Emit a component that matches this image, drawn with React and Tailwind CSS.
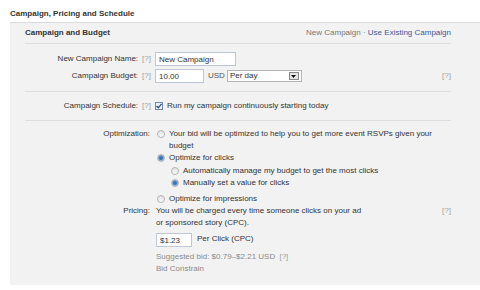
import React from 'react';

const Help = ({ className = '' }) => (
    <span className={`text-[#a0a0a0] ${className}`}>[?]</span>
);

const Radio = ({ checked }) => (
    <span className="inline-flex items-center justify-center w-[8px] h-[8px] rounded-full border border-[#b4b4b4] bg-gradient-to-b from-[#e2e2e2] to-[#fafafa] shrink-0">
        {checked && <span className="w-[4px] h-[4px] rounded-full bg-[#2f74c0] ring-1 ring-[#15508f]/40" />}
    </span>
);

const Checkbox = () => (
    <span className="inline-flex items-center justify-center w-[8px] h-[8px] border border-[#7387a8] bg-[#eef2f8] shrink-0">
        <svg width="6" height="6" viewBox="0 0 6 6">
            <path d="M0.6 3 L2.3 4.8 L5.5 0.8" fill="none" stroke="#1d4c9c" strokeWidth="1.3" />
        </svg>
    </span>
);

const Label = ({ children, help }) => (
    <div className="w-[126px] shrink-0 flex justify-end gap-[4px]">
        <span>{children}</span>
        {help && <Help />}
    </div>
);

const App = () => {
    return (
        <div className="w-[480px] h-[290px] bg-white overflow-hidden text-[8px] text-[#333] leading-[12px]" style={{ fontFamily: '"Liberation Sans", Arial, sans-serif' }}>
            <div className="pl-[10px] pt-[8px] h-[22px] font-bold">Campaign, Pricing and Schedule</div>

            <div className="ml-[10px] h-[263px] bg-[#f2f2f2] border-t border-[#dadada] pl-[15px] pr-[29px]">
                <div className="flex justify-between items-center h-[21px] border-b border-[#dedede]">
                    <span className="font-bold">Campaign and Budget</span>
                    <span className="text-[#777]">
                        New Campaign · <span className="text-[#3b5998]">Use Existing Campaign</span>
                    </span>
                </div>

                <div className="pt-[8px] pb-[8px] border-b border-[#dedede] flex flex-col gap-[3px]">
                    <div className="flex items-center">
                        <Label help>New Campaign Name:</Label>
                        <div className="pl-[4px]">
                            <input readOnly value="New Campaign" className="block w-[81px] h-[14px] bg-white border border-[#bdc7d8] px-[3px] text-[8px] outline-none" />
                        </div>
                    </div>
                    <div className="flex items-center">
                        <Label help>Campaign Budget:</Label>
                        <div className="flex-1 pl-[4px] flex items-center">
                            <input readOnly value="10.00" className="block w-[49px] h-[14px] bg-white border border-[#bdc7d8] px-[3px] text-[8px] outline-none" />
                            <span className="ml-[4px] text-[#555]">USD</span>
                            <div className="ml-[2px] w-[75px] h-[12px] bg-white border border-[#b5b5b5] flex items-center justify-between pl-[2px] pr-[2px]">
                                <span className="leading-[10px]">Per day</span>
                                <span className="w-[10px] h-[8px] border border-[#8a8a8a] bg-[#e6e6e6] flex items-center justify-center">
                                    <svg width="5" height="3" viewBox="0 0 5 3"><path d="M0 0 H5 L2.5 3 Z" fill="#111" /></svg>
                                </span>
                            </div>
                        </div>
                        <Help />
                    </div>
                </div>

                <div className="py-[8px] border-b border-[#dedede]">
                    <div className="flex items-center">
                        <Label help>Campaign Schedule:</Label>
                        <div className="pl-[4px] flex items-center gap-[4px]">
                            <Checkbox />
                            <span>Run my campaign continuously starting today</span>
                        </div>
                    </div>
                </div>

                <div className="pt-[7px]">
                    <div className="flex">
                        <div className="w-[125px] shrink-0 text-right">Optimization:</div>
                        <div className="flex-1 pl-[7px]">
                            <div className="flex gap-[4px]">
                                <span className="pt-[2px]"><Radio /></span>
                                <span className="w-[272px]">Your bid will be optimized to help you to get more event RSVPs given your budget</span>
                            </div>
                            <div className="flex items-center gap-[4px]"><Radio checked /><span>Optimize for clicks</span></div>
                            <div className="flex items-center gap-[4px] pl-[14px] mt-[1px]"><Radio /><span>Automatically manage my budget to get the most clicks</span></div>
                            <div className="flex items-center gap-[4px] pl-[14px]"><Radio checked /><span>Manually set a value for clicks</span></div>
                            <div className="flex items-center gap-[4px] mt-[4px]"><Radio /><span>Optimize for impressions</span></div>
                        </div>
                    </div>
                    <div className="flex">
                        <div className="w-[125px] shrink-0 text-right">Pricing:</div>
                        <div className="flex-1 pl-[6px]">
                            <div className="flex justify-between">
                                <span className="w-[210px]">You will be charged every time someone clicks on your ad or sponsored story (CPC).</span>
                                <Help />
                            </div>
                            <div className="flex items-center gap-[5px] mt-[4px]">
                                <input readOnly value="$1.23" className="block w-[36px] h-[14px] bg-white border border-[#bdc7d8] px-[3px] text-[8px] outline-none" />
                                <span className="-mt-[3px]">Per Click (CPC)</span>
                            </div>
                            <div className="text-[#8a8a8a] mt-[4px]">Suggested bid: $0.79–$2.21 USD <Help className="ml-[2px]" /></div>
                            <div className="text-[#8a8a8a]">Bid Constrain</div>
                        </div>
                    </div>
                </div>
            </div>
        </div>
    );
};

export default App;
